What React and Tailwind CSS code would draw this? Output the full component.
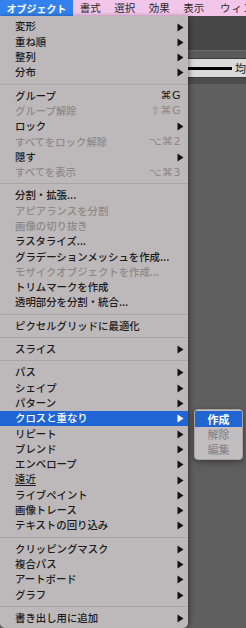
const font = { fontFamily: '"Noto Sans CJK JP", "Noto Sans", "DejaVu Sans", sans-serif' }

const sections = [
  [
    { label: '変形', sub: true },
    { label: '重ね順', sub: true },
    { label: '整列', sub: true },
    { label: '分布', sub: true },
  ],
  [
    { label: 'グループ', key: '⌘G' },
    { label: 'グループ解除', key: '⇧⌘G', off: true },
    { label: 'ロック', sub: true },
    { label: 'すべてをロック解除', key: '⌥⌘2', off: true },
    { label: '隠す', sub: true },
    { label: 'すべてを表示', key: '⌥⌘3', off: true },
  ],
  [
    { label: '分割・拡張...' },
    { label: 'アピアランスを分割', off: true },
    { label: '画像の切り抜き', off: true },
    { label: 'ラスタライズ...' },
    { label: 'グラデーションメッシュを作成...' },
    { label: 'モザイクオブジェクトを作成...', off: true },
    { label: 'トリムマークを作成' },
    { label: '透明部分を分割・統合...' },
  ],
  [{ label: 'ピクセルグリッドに最適化' }],
  [{ label: 'スライス', sub: true }],
  [
    { label: 'パス', sub: true },
    { label: 'シェイプ', sub: true },
    { label: 'パターン', sub: true },
    { label: 'クロスと重なり', sub: true, active: true },
    { label: 'リピート', sub: true },
    { label: 'ブレンド', sub: true },
    { label: 'エンベロープ', sub: true },
    { label: '遠近', sub: true, under: true },
    { label: 'ライブペイント', sub: true },
    { label: '画像トレース', sub: true },
    { label: 'テキストの回り込み', sub: true },
  ],
  [
    { label: 'クリッピングマスク', sub: true },
    { label: '複合パス', sub: true },
    { label: 'アートボード', sub: true },
    { label: 'グラフ', sub: true },
  ],
  [{ label: '書き出し用に追加', sub: true }],
]

function Arrow({ white }) {
  return (
    <svg width="7" height="9" viewBox="0 0 7 9" className="absolute left-[177px] top-[3.5px]">
      <path d="M0.5 0.5 L6.5 4.5 L0.5 8.5 Z" fill={white ? '#ffffff' : '#111111'} />
    </svg>
  )
}

function Item({ it }) {
  const color = it.active ? 'text-white' : it.off ? 'text-[#8c8889]' : 'text-[#1c1b1b]'
  return (
    <div className={`relative h-[15.3px] flex items-center pl-[15px] text-[10.4px] leading-none font-medium whitespace-nowrap ${color} ${it.active ? 'bg-[#1f66d4]' : ''}`}>
      <span className={it.under ? 'underline underline-offset-2' : ''}>{it.label}</span>
      {it.key && (
        <span className="absolute right-[7px] top-[2px] text-[11px] tracking-[0.5px]" style={{ fontFamily: '"DejaVu Sans", "Liberation Sans", sans-serif' }}>
          {it.key}
        </span>
      )}
      {it.sub && <Arrow white={it.active} />}
    </div>
  )
}

export default function App() {
  return (
    <div className="relative w-[246px] h-[628px] overflow-hidden bg-[#5f5f5f]" style={font}>
      <div className="h-[16px] flex items-center bg-[#f2c6e8] text-[10.5px] text-[#2a2a2a] whitespace-nowrap">
        <div className="w-[73px] shrink-0 h-full flex items-center justify-center bg-[#3381ec] text-white text-[10px] font-bold">オブジェクト</div>
        <span className="w-[34.5px] shrink-0 text-center">書式</span>
        <span className="w-[34.5px] shrink-0 text-center">選択</span>
        <span className="w-[34.5px] shrink-0 text-center">効果</span>
        <span className="w-[34.5px] shrink-0 text-center">表示</span>
        <span className="pl-[9px] tracking-[1px]">ウィンドウ</span>
      </div>

      <div className="flex h-[612px]">
        <div className="w-[193px] h-full bg-[#bdb9ba] pt-[3px] rounded-b-[5px] shadow-[2px_0_4px_rgba(0,0,0,0.35)] z-10">
          {sections.map((sec, i) => (
            <div key={i}>
              {i > 0 && (
                <div className="h-[8px] flex flex-col justify-center">
                  <div className="h-px bg-[#a8a4a5]" />
                </div>
              )}
              {sec.map((it) => <Item key={it.label} it={it} />)}
            </div>
          ))}
        </div>

        <div className="flex-1 flex flex-col">
          <div className="h-[34px] bg-[#474747]" />
          <div className="h-px bg-[#6a6a6a]" />
          <div className="h-[7px] bg-[#5a5a5a]" />
          <div className="h-[20px] bg-[#dadada] border-y border-[#3c3c3c] flex items-center text-[11px] text-[#222]">
            <div className="w-[44px] h-[3px] bg-black" />
            <span className="ml-[3px]">均</span>
          </div>
          <div className="h-[6px] bg-[#4c4c4c]" />
          <div className="flex-1 bg-[#5f5f5f]" />
        </div>
      </div>

      <div className="absolute left-[194px] top-[409px] w-[49px] h-[51px] bg-[#c2bebf] rounded-[4px] border border-[#a9a5a6] shadow-[0_2px_6px_rgba(0,0,0,0.4)] overflow-hidden pt-[1px] z-20">
        <div className="h-[16px] flex items-center justify-center bg-[#1f66d4] text-white text-[11px] font-bold">作成</div>
        <div className="h-[15px] flex items-center justify-center text-[#8c8889] text-[11px] font-medium">解除</div>
        <div className="h-[15px] flex items-center justify-center text-[#8c8889] text-[11px] font-medium">編集</div>
      </div>
    </div>
  )
}
